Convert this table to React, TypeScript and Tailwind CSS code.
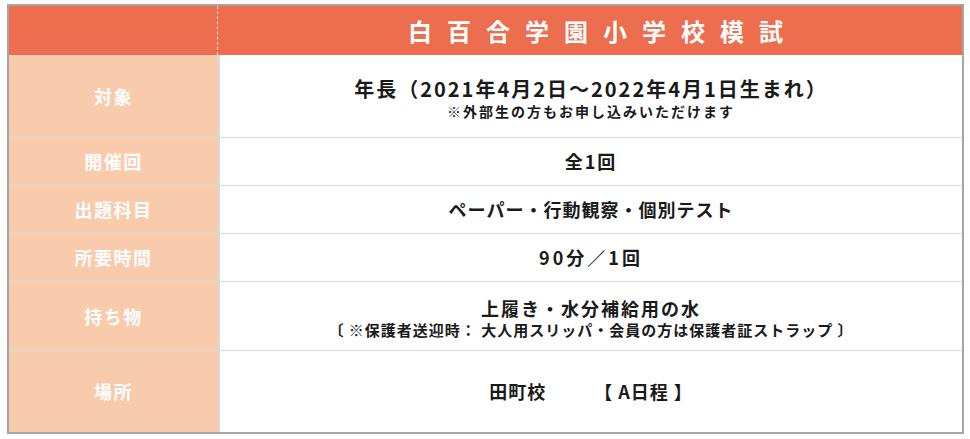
const rows = [
  { label: "対象", h: "h-[83px]" },
  { label: "開催回", h: "h-[48px]" },
  { label: "出題科目", h: "h-[48px]" },
  { label: "所要時間", h: "h-[48px]" },
  { label: "持ち物", h: "h-[69px]" },
  { label: "場所", h: "h-[81px]" },
];

const contents = [
  <div className="pt-[3px]">
    <p className="text-[20px] leading-[26px] tracking-[2px]">年長（2021年4月2日～2022年4月1日生まれ）</p>
    <p className="text-[14px] leading-[18px] tracking-[2px]">※外部生の方もお申し込みいただけます</p>
  </div>,
  <p className="text-[18px] tracking-[2px]">全1回</p>,
  <p className="text-[18px] tracking-[1px]">ペーパー・行動観察・個別テスト</p>,
  <p className="text-[18px] tracking-[3px]">90分／1回</p>,
  <div className="pt-[4px]">
    <p className="text-[18px] leading-[24px] tracking-[2px]">上履き・水分補給用の水</p>
    <p className="text-[15px] leading-[20px] tracking-[1px]">〔 ※保護者送迎時： 大人用スリッパ・会員の方は保護者証ストラップ 〕</p>
  </div>,
  <p className="text-[18px] tracking-[1px] whitespace-pre">田町校　　　【 A日程 】</p>,
];

export default function App() {
  return (
    <div
      className="pt-[4px] pl-[7px] bg-white min-h-[439px]"
      style={{ fontFamily: '"Noto Sans CJK JP", "Noto Sans", sans-serif' }}
    >
      <div className="w-[957px] border-2 border-[#a6a6a6] font-bold">
        <div className="flex h-[49px] bg-[#ec6e4f]">
          <div className="w-[209px] border-r border-dashed border-white/80" />
          <div className="flex-1 flex items-center justify-center text-white text-[24px] tracking-[15px] pl-[26px]">
            白百合学園小学校模試
          </div>
        </div>
        {rows.map((row, i) => (
          <div
            key={row.label}
            className={`flex ${row.h} ${i < rows.length - 1 ? "border-b border-[#d9d9d9]" : ""}`}
          >
            <div className="w-[211px] shrink-0 bg-[#f8cbad] border-r-2 border-[#d9d9d9] flex items-center justify-center text-white text-[18px] tracking-[1.5px]">
              {row.label}
            </div>
            <div className="flex-1 flex flex-col items-center justify-center text-[#1a1a1a] text-center">
              {contents[i]}
            </div>
          </div>
        ))}
      </div>
    </div>
  );
}
